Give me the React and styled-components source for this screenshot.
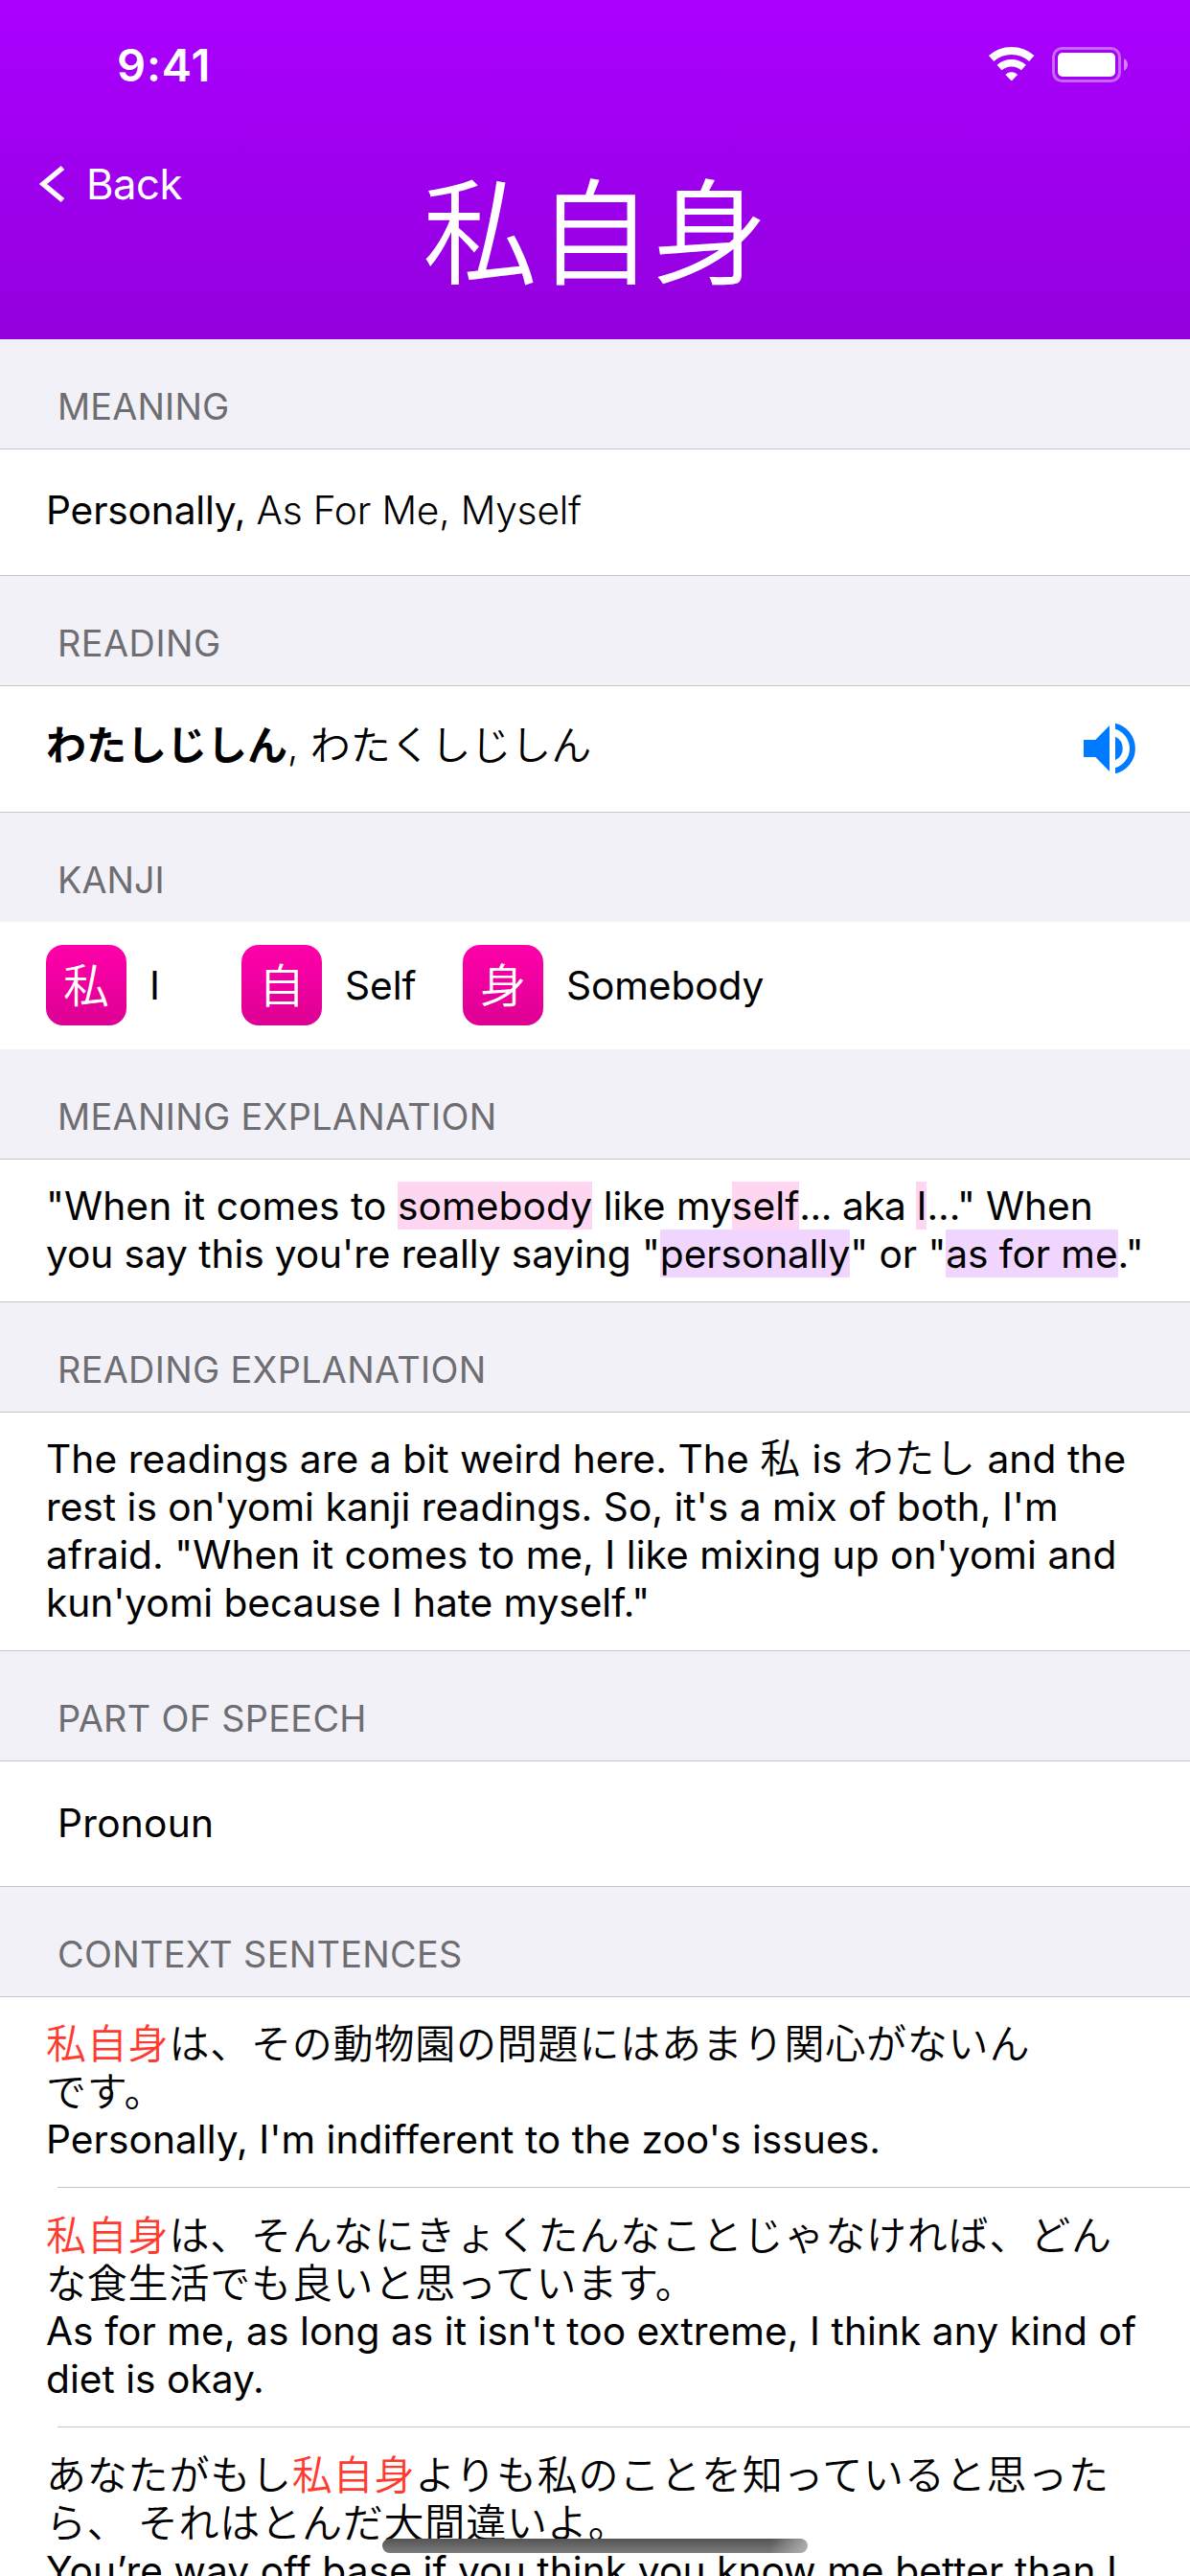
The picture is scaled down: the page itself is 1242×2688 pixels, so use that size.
import React from 'react';
import styled, { createGlobalStyle, css } from 'styled-components';

const LATIN = 'Inter, "Noto Sans CJK JP", sans-serif';
const JAPANESE = '"Noto Sans CJK JP", Inter, sans-serif';
const SEPARATOR = '#c6c6c8';

const GlobalStyle = createGlobalStyle`
  * { box-sizing: border-box; }
  html, body { margin: 0; padding: 0; overflow: hidden; }
  body { background: #f2f1f7; color: #000; font-family: ${LATIN}; }
`;

const Screen = styled.main`
  position: relative;
  width: 1242px;
  height: 2688px;
  overflow: hidden;
  display: flex;
  flex-direction: column;
`;

const Header = styled.header`
  flex: none;
  height: 354px;
  display: flex;
  flex-direction: column;
  color: #fff;
  background: linear-gradient(180deg, #aa00ff, #9300dd);
`;

const StatusBar = styled.div`
  height: 134px;
  padding: 43px 64px 0 122px;
  display: flex;
  justify-content: space-between;
  align-items: flex-start;
`;

const Clock = styled.span`
  font-size: 47px;
  font-weight: 600;
  line-height: 50px;
  letter-spacing: 0.9px;
`;

const StatusIcons = styled.div`
  display: flex;
  gap: 18px;
  padding-top: 6px;
`;

const NavBar = styled.nav`
  display: grid;
  grid-template-columns: 1fr auto 1fr;
  align-items: start;
`;

const BackButton = styled.a`
  margin: 33px 0 0 40px;
  display: flex;
  align-items: center;
  gap: 21px;
  height: 50px;
  font-size: 43.6px;
  line-height: 50px;
  letter-spacing: -0.5px;
`;

const BackLabel = styled.span`
  margin-top: 1px;
`;

const Title = styled.h1`
  margin: 42px 0 0;
  font-family: ${JAPANESE};
  font-size: 120px;
  font-weight: 350;
  line-height: 120px;
`;

const SectionTitle = styled.h2`
  margin: 0;
  flex: none;
  height: 114px;
  padding: 45px 0 0 60px;
  font-size: 37.8px;
  font-weight: 400;
  line-height: 50px;
  letter-spacing: ${(p) => p.$tracking ?? 0.33}px;
  color: #6d6d72;
`;

const Cell = styled.div`
  flex: none;
  height: ${(p) => p.$height}px;
  background: #fff;
  border: solid ${SEPARATOR};
  border-width: 1px 0;
  padding: ${(p) => p.$top ?? 23}px 48px 0 ${(p) => p.$left ?? 48}px;
`;

const ReadingCell = styled(Cell)`
  display: flex;
  justify-content: space-between;
  padding-right: 57px;
`;

const Line = styled.div`
  height: 50px;
  font-size: 40.7px;
  line-height: 51px;
  white-space: pre;
  letter-spacing: ${(p) => p.$tracking ?? 0}px;
`;

const Tracked = styled.span`
  letter-spacing: ${(p) => p.$tracking}px;
`;

const Light = styled.span`
  font-weight: 300;
  letter-spacing: -0.22px;
`;

const japaneseText = css`
  font-family: ${JAPANESE};
  font-size: 42px;
`;

const Ja = styled.span`
  ${japaneseText}
  line-height: 1;
  letter-spacing: ${(p) => p.$tracking ?? 0.75}px;
  font-weight: ${(p) => p.$weight ?? 350};
`;

const ReadingComma = styled.span`
  font-weight: 300;
  letter-spacing: 0.4px;
`;

const JaLine = styled.div`
  ${japaneseText}
  font-weight: 350;
  height: 50px;
  line-height: 46px;
  letter-spacing: 0.8px;
  white-space: pre;
`;

const Vocab = styled.span`
  color: #ff3b30;
`;

const Highlight = styled.mark`
  display: inline-block;
  height: 50px;
  line-height: 51px;
  vertical-align: top;
  color: inherit;
  background: ${(p) => (p.$kind === 'kanji' ? '#ffd6f1' : '#f0d6ff')};
`;

const KanjiRow = styled.div`
  flex: none;
  height: 133px;
  background: #fff;
  padding: 24px 48px 0;
  display: grid;
  grid-template-columns: 204px 231px auto;
`;

const KanjiItem = styled.div`
  display: flex;
  align-items: center;
  gap: 24px;
  height: 84px;
`;

const KanjiName = styled.span`
  margin-top: 2px;
  font-size: 40.7px;
  line-height: 50px;
  letter-spacing: -0.1px;
`;

const KanjiTile = styled.span`
  width: 84px;
  height: 84px;
  border-radius: 18px;
  background: linear-gradient(180deg, #ff00aa, #dd0093);
  color: #fff;
  text-align: center;
  font-family: ${JAPANESE};
  font-size: 48px;
  font-weight: 350;
  line-height: 79px;
`;

const Sentences = styled.div`
  flex: none;
  background: #fff;
  border-top: 1px solid ${SEPARATOR};
`;

const Sentence = styled.article`
  padding: ${(p) => (p.$first ? 23 : 24)}px 0 25px 48px;
`;

const Divider = styled.hr`
  margin: 0 0 0 60px;
  border: 0;
  height: 1px;
  background: ${SEPARATOR};
`;

const HomeIndicator = styled.div`
  position: absolute;
  left: 399px;
  bottom: 24px;
  width: 444px;
  height: 15px;
  border-radius: 8px;
  background:
    linear-gradient(100deg, transparent 91%, rgba(200, 200, 200, 0.75) 100%),
    linear-gradient(180deg, #545454, #7b7b7b);
`;

const Wifi = () => (
  <svg width="49" height="37" viewBox="-0.4 0 49 37" fill="none" stroke="#fff">
    <path d="M3.2 12.1a31.7 31.7 0 0 1 42.2 0" strokeWidth="8" />
    <path d="M11.6 21.6a19 19 0 0 1 25.4 0" strokeWidth="7.4" />
    <path d="M24.3 35l-5.9-6.1a9 9 0 0 1 11.8 0z" fill="#fff" strokeWidth="1" strokeLinejoin="round" />
  </svg>
);

const Battery = () => (
  <svg width="80" height="37" viewBox="0 0 80 37">
    <rect x="1.5" y="1.5" width="69" height="34" rx="9" fill="none" stroke="#fff" strokeOpacity=".4" strokeWidth="3" />
    <rect x="6" y="6" width="60" height="25" rx="5" fill="#fff" />
    <path d="M75 12.2c2.6.9 4 3.5 4 6.3s-1.4 5.4-4 6.3z" fill="#fff" fillOpacity=".5" />
  </svg>
);

const Chevron = () => (
  <svg width="29" height="40" viewBox="0 0 29 40" fill="none" stroke="#fff" strokeWidth="5.4">
    <path d="M25.5 3L5 20l20.5 17" />
  </svg>
);

const SpeakerIcon = styled.svg`
  margin-top: 1px;
`;

const Speaker = () => (
  <SpeakerIcon width="54" height="54" viewBox="0 0 54 54" fill="#007aff">
    <path d="M0 18h12.3L27 3v48L12.3 36H0z" />
    <path d="M33 .7a27 27 0 0 1 0 52.6v-6.1a21.1 21.1 0 0 0 0-40.4z" />
    <path d="M33 14.8a13.5 13.5 0 0 1 0 24.4z" />
  </SpeakerIcon>
);

const KANJI = [
  { char: '私', name: 'I' },
  { char: '自', name: 'Self' },
  { char: '身', name: 'Somebody' },
];

export default function App() {
  return (
    <Screen>
      <GlobalStyle />
      <Header>
        <StatusBar>
          <Clock>9:41</Clock>
          <StatusIcons>
            <Wifi />
            <Battery />
          </StatusIcons>
        </StatusBar>
        <NavBar>
          <BackButton>
            <Chevron />
            <BackLabel>Back</BackLabel>
          </BackButton>
          <Title>私自身</Title>
        </NavBar>
      </Header>

      <SectionTitle $tracking={0.17}>MEANING</SectionTitle>
      <Cell $height={133} $top={38}>
        <Line $tracking={-0.18}>
          Personally, <Light>As For Me, Myself</Light>
        </Line>
      </Cell>

      <SectionTitle $tracking={0.5}>READING</SectionTitle>
      <ReadingCell $height={133} $top={37}>
        <Line>
          <Ja $weight={700} $tracking={0}>わたしじしん</Ja>
          <ReadingComma>, </ReadingComma>
          <Ja $tracking={-0.1}>わたくしじしん</Ja>
        </Line>
        <Speaker />
      </ReadingCell>

      <SectionTitle $tracking={0}>KANJI</SectionTitle>
      <KanjiRow>
        {KANJI.map((k) => (
          <KanjiItem key={k.char}>
            <KanjiTile>{k.char}</KanjiTile>
            <KanjiName>{k.name}</KanjiName>
          </KanjiItem>
        ))}
      </KanjiRow>

      <SectionTitle>MEANING EXPLANATION</SectionTitle>
      <Cell $height={150}>
        <Line $tracking={0.08}>
          "When it comes to <Highlight $kind="kanji">somebody</Highlight>
          <Tracked $tracking={0}> like my</Tracked>
          <Highlight $kind="kanji">self</Highlight>
          <Tracked $tracking={-0.5}>... aka </Tracked>
          <Highlight $kind="kanji">I</Highlight>
          <Tracked $tracking={-0.1}>..." When</Tracked>
        </Line>
        <Line $tracking={-0.1}>
          you say this you're really saying "<Highlight>personally</Highlight>" or "
          <Highlight>as for me</Highlight>."
        </Line>
      </Cell>

      <SectionTitle>READING EXPLANATION</SectionTitle>
      <Cell $height={250}>
        <Line $tracking={0.08}>
          The readings are a bit weird here. The <Ja>私</Ja> is <Ja>わたし</Ja> and the
        </Line>
        <Line>rest is on'yomi kanji readings. So, it's a mix of both, I'm</Line>
        <Line $tracking={0.04}>afraid. "When it comes to me, I like mixing up on'yomi and</Line>
        <Line $tracking={-0.07}>kun'yomi because I hate myself."</Line>
      </Cell>

      <SectionTitle>PART OF SPEECH</SectionTitle>
      <Cell $height={132} $top={39} $left={60}>
        <Line $tracking={0.25}>Pronoun</Line>
      </Cell>

      <SectionTitle>CONTEXT SENTENCES</SectionTitle>
      <Sentences>
        <Sentence $first>
          <JaLine>
            <Vocab>私自身</Vocab>は、その動物園の問題にはあまり関心がないん
          </JaLine>
          <JaLine>です。</JaLine>
          <Line $tracking={0.04}>Personally, I'm indifferent to the zoo's issues.</Line>
        </Sentence>
        <Divider />
        <Sentence>
          <JaLine>
            <Vocab>私自身</Vocab>は、そんなにきょくたんなことじゃなければ、どん
          </JaLine>
          <JaLine>な食生活でも良いと思っています。</JaLine>
          <Line $tracking={0.05}>As for me, as long as it isn't too extreme, I think any kind of</Line>
          <Line>diet is okay.</Line>
        </Sentence>
        <Divider />
        <Sentence>
          <JaLine>
            あなたがもし<Vocab>私自身</Vocab>よりも私のことを知っていると思った
          </JaLine>
          <JaLine>ら、 それはとんだ大間違いよ。</JaLine>
          <Line $tracking={0.07}>You’re way off base if you think you know me better than I</Line>
        </Sentence>
      </Sentences>
      <HomeIndicator />
    </Screen>
  );
}
